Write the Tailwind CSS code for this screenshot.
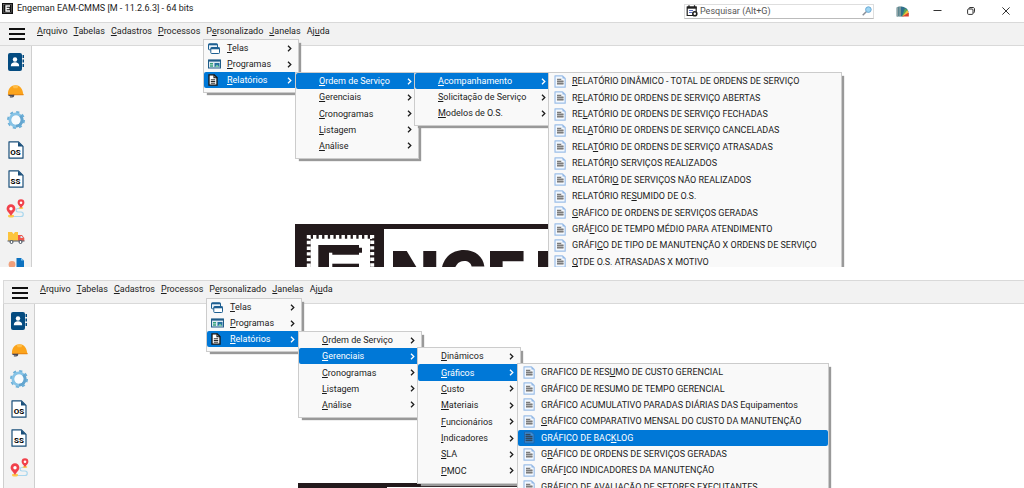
<!DOCTYPE html>
<html lang="pt-BR">
<head>
<meta charset="utf-8">
<title>Engeman EAM-CMMS</title>
<script src="https://cdn.jsdelivr.net/npm/@tailwindcss/browser@4"></script>
</head>
<body class="bg-white font-[Roboto,'Open_Sans',sans-serif] text-[9px] leading-3 text-[#1c1c1c]">

<svg class="hidden" aria-hidden="true">
  <symbol id="burger" viewBox="0 0 16 12"><path d="M0 0h16v2H0zM0 5h16v2H0zM0 10h16v2H0z" fill="#111"/></symbol>
  <symbol id="chev" viewBox="0 0 5 7"><path d="M1 .8 3.8 3.5 1 6.2" fill="none" stroke="currentColor" stroke-width="1.3"/></symbol>
  <symbol id="doc" viewBox="0 0 12 13"><path d="M1 .8h7.500L11.200 3.500V12.200H1z" fill="#f3f8fe" stroke="#9dbfe8" stroke-width="1.200" stroke-linejoin="round"/><path d="M8.500 1 11 3.500H8.500z" fill="#8db4e3"/><path d="M3 3.500h4.500v1.500H9.500V10H3z" fill="#b5b5b5"/><path d="M3 4.500h4M3 6.500h6.500M3 8.500h6.500" stroke="#7c7c7c" stroke-width="1"/></symbol>
  <symbol id="telas" viewBox="0 0 12 11"><rect x=".5" y=".8" width="9" height="6" rx=".8" fill="#eaf3fa" stroke="#1d5f91"/><path d="M.5 1.500h9" stroke="#1d5f91" stroke-width="1.600"/><rect x="2.800" y="4.500" width="8.700" height="6" rx=".8" fill="#fff" stroke="#1d5f91"/><path d="M2.800 5.400h8.700" stroke="#1d5f91" stroke-width="1.800"/></symbol>
  <symbol id="progs" viewBox="0 0 13 10"><rect x=".5" y="1" width="12" height="8" fill="#dceaf3" stroke="#1f5c88"/><path d="M.5 1.700h12" stroke="#1f5c88" stroke-width="1.800"/><path d="M2 4h3v1.500H2zM2 6.200h3v1.500H2z" fill="#35a27a"/><path d="M6.500 4h5v4h-5z" fill="#24709f"/><path d="m7 8 2-2.500L11.200 8z" fill="#7fd1a6"/></symbol>
  <symbol id="report" viewBox="0 0 10 12"><path d="M1 .8h5.200L9 3.600v7.600H1z" fill="#fff" stroke="#111" stroke-width="1.300"/><path d="M6 .8v3h3" fill="none" stroke="#111" stroke-width="1.100"/><path d="M2.800 5.800h4.400M2.800 7.500h4.400M2.800 9.200h4.400" stroke="#111" stroke-width=".9"/></symbol>
  <symbol id="contact" viewBox="0 0 18 18"><rect x="1" y="0" width="14" height="18" rx="2" fill="#044b80"/><path d="M15.500 2h1.500v3h-1.500zM15.500 6.500h1.500v3h-1.500zM15.500 11h1.500v3h-1.500z" fill="#044b80"/><circle cx="8" cy="6.500" r="2.200" fill="#fff"/><path d="M3.800 13.200c0-2.800 1.700-3.900 4.200-3.900s4.200 1.100 4.200 3.900z" fill="#fff"/></symbol>
  <symbol id="helmet" viewBox="0 0 18 14"><path d="M1 10C1 4.500 4.500 1 9 1s7.500 3.500 8 8.500l.5 1.500H1z" fill="#fba41c"/><path d="M6 1.800C8 .8 10.500.8 12 1.600L11 4 7 4z" fill="#ffbe4a"/><path d="M1 10.200h16.500v1.300H8l-2-.6H1z" fill="#ec8a12"/><path d="M1.500 11.700h5.500c0 1.300-1.500 1.600-4 1.600" fill="none" stroke="#4a4a55" stroke-width="1.400"/></symbol>
  <symbol id="gear" viewBox="0 0 18 18"><circle cx="9" cy="9" r="7.900" fill="none" stroke="#6db0d8" stroke-width="2.200" stroke-dasharray="3.100 3.100"/><circle cx="9" cy="9" r="6" fill="none" stroke="#86c3e6" stroke-width="3"/><path d="M13.200 4.800A6 6 0 0 1 9 15" fill="none" stroke="#64a5cf" stroke-width="3"/><circle cx="9" cy="9" r="4.500" fill="#f8fbfd"/></symbol>
  <symbol id="file" viewBox="0 0 16 18"><path d="M1 .8h9.500L15 5.300v11.900H1z" fill="#fff" stroke="#1a4f7a" stroke-width="1.200" stroke-linejoin="round"/><path d="M10 .8V5.500h5z" fill="#1a4f7a"/></symbol>
  <symbol id="route" viewBox="0 0 19 19"><path d="M6 17.500h9c3 0 3-4.500 0-4.500h-3c-2.500 0-2.500-3.500 0-3.500h3" fill="none" stroke="#a9d7ee" stroke-width="1.200"/><ellipse cx="5" cy="17" rx="3" ry="1.500" fill="#ffc84a"/><ellipse cx="15" cy="9" rx="2.400" ry="1.100" fill="#ffc84a"/><path d="M5 17C3 13.500.6 12 .6 9.700a4.400 4.400 0 0 1 8.800 0C9.400 12 7 13.500 5 17z" fill="#f1414b"/><circle cx="5" cy="9.700" r="1.700" fill="#fff"/><path d="M15 9.200c-1.600-2.600-3.400-3.700-3.400-5.500a3.400 3.400 0 0 1 6.800 0c0 1.800-1.800 2.900-3.400 5.500z" fill="#f1414b"/><circle cx="15" cy="3.800" r="1.300" fill="#fff"/></symbol>
  <symbol id="truck" viewBox="0 0 18 14"><path d="M1 1h4l1.500 2L8 1h3v9H1z" fill="#fcc43e"/><path d="M11 4h4l2.300 3v3H11z" fill="#f0564a"/><path d="M13.500 5h1.300l1.200 2h-2.500z" fill="#cfe9f7"/><path d="M.5 10h17" stroke="#6a6f78" stroke-width="1.200"/><circle cx="4.500" cy="11" r="1.500" fill="#fff" stroke="#44505c"/><circle cx="13.500" cy="11" r="1.500" fill="#fff" stroke="#44505c"/></symbol>
  <symbol id="person" viewBox="0 0 18 18"><path d="M9.500 0h4.500l3 2.500V9H9.500z" fill="#0d72c0"/><path d="M14 0v2.500h3z" fill="#7fc0ee"/><circle cx="5" cy="6.500" r="3.400" fill="#f0a07c"/><path d="M0 16c0-4 2-6 5-6s5 2 5 6z" fill="#1479c4"/></symbol>
</svg>

<!-- Janela superior -->
<section class="relative h-[267px] overflow-hidden">
  <header class="flex h-[22px] items-center">
    <svg class="-mt-1.5 ml-0.5 size-[11px] shrink-0" viewBox="0 0 11 11"><rect width="11" height="11" fill="#111"/><rect x="1.300" y="1.300" width="8.400" height="8.400" fill="none" stroke="#888" stroke-width=".5"/><path d="M8 3H4v5h4M4 5.500h3.500" fill="none" stroke="#fff" stroke-width="1.300"/></svg>
    <h1 class="-mt-1.5 ml-1 flex-1">Engeman EAM-CMMS [M - 11.2.6.3] - 64 bits</h1>
    <label class="flex h-[15px] w-[190px] items-center border border-[#dedede] border-b-[#bbb] px-px" for="busca">
      <svg class="size-3 shrink-0" viewBox="0 0 12 12"><path d="M1.200 2h9v8.500h-9z" fill="#fff" stroke="#222" stroke-width="1.200"/><path d="M1 1.500h9.500v2.200H1z" fill="#222"/><path d="M3 .3v1.800M8.500.3v1.800" stroke="#222" stroke-width="1.200"/><path d="M3 5.500h4M3 7.500h3" stroke="#5a6fc4"/><circle cx="8.800" cy="8.800" r="2" fill="#fff" stroke="#222" stroke-width="1.600"/></svg>
      <input id="busca" type="text" aria-label="Pesquisar" placeholder="Pesquisar (Alt+G)" class="ml-0.5 min-w-0 flex-1 bg-transparent placeholder:text-[#555] placeholder:opacity-100">
      <svg class="size-2.5 shrink-0" viewBox="0 0 10 10"><path d="M.7 9.300 4.500 5.500" stroke="#8a8f99" stroke-width="1.500"/><circle cx="6.400" cy="3.600" r="2.800" fill="#9ed5f2" stroke="#6aa9d4"/></svg>
    </label>
    <button class="ml-[22px]" aria-label="Temas"><svg class="h-[11px] w-[13px]" viewBox="0 0 13 11"><path d="M.5 1.500C2 0 6 0 7.500 1.500V10.500H.5z" fill="#5a8790"/><path d="M1.500 1.200v9.300M4 .8v9.700" stroke="#93a3a6"/><path d="M5 10.500V.8C9 .5 12 3 12.500 6z" fill="#2f6f8c"/><path d="M6 10.500 9 2.200l3 2.600z" fill="#58a85a"/><path d="m6 10.500 5.500-6.500 1.300 3.500z" fill="#f3c23c"/><path d="m6 10.500 6.800-4v4z" fill="#d9432f"/></svg></button>
    <button class="ml-6" aria-label="Minimizar"><svg class="h-2.5 w-[9px]" viewBox="0 0 9 10"><path d="M.5 4.500h8" stroke="#333"/></svg></button>
    <button class="ml-[25px]" aria-label="Restaurar"><svg class="size-2" viewBox="0 0 8 8"><rect x=".6" y="2" width="5.400" height="5.400" rx="1" fill="none" stroke="#333"/><path d="M2 1.900V1.500c0-.6.4-1 1-1h3c.9 0 1.500.6 1.500 1.500v2.800c0 .6-.4 1-1 1" fill="none" stroke="#333"/></svg></button>
    <button class="mr-3.5 ml-[27px]" aria-label="Fechar"><svg class="size-2" viewBox="0 0 8 8"><path d="m.4.4 7.200 7.200M7.600.4.4 7.600" stroke="#333"/></svg></button>
  </header>

  <div class="flex h-6 border-y border-[#d9d9d9] bg-[#f2f2f2]">
    <button class="mt-[5px] ml-[9px] h-3 w-4" aria-label="Menu"><svg class="h-3 w-4"><use href="#burger"/></svg></button>
    <nav class="mt-0.5 ml-3 flex h-3 gap-1.5">
      <button><u>A</u>rquivo</button><button><u>T</u>abelas</button><button><u>C</u>adastros</button><button><u>P</u>rocessos</button><button>P<u>e</u>rsonalizado</button><button><u>J</u>anelas</button><button>Aj<u>u</u>da</button>
    </nav>
  </div>

  <div class="flex h-[221px]">
    <aside class="flex h-[236px] w-8 flex-col border-r border-[#cfcfcf] bg-[#f2f2f2] pt-px">
      <button class="grid flex-1 place-items-center" aria-label="Contatos"><svg class="size-[18px]"><use href="#contact"/></svg></button>
      <button class="grid flex-1 place-items-center" aria-label="Funcionários"><svg class="h-3.5 w-[17px]"><use href="#helmet"/></svg></button>
      <button class="grid flex-1 place-items-center" aria-label="Configurações"><svg class="size-[18px]"><use href="#gear"/></svg></button>
      <button class="grid flex-1 place-items-center"><span class="grid h-[18px] w-4 text-[8px] leading-3 font-bold text-black"><svg class="col-start-1 row-start-1 h-[18px] w-4"><use href="#file"/></svg><span class="col-start-1 row-start-1 self-end text-center">OS</span></span></button>
      <button class="grid flex-1 place-items-center"><span class="grid h-[18px] w-4 text-[8px] leading-3 font-bold text-black"><svg class="col-start-1 row-start-1 h-[18px] w-4"><use href="#file"/></svg><span class="col-start-1 row-start-1 self-end text-center">SS</span></span></button>
      <button class="grid flex-1 place-items-center" aria-label="Rotas"><svg class="size-[19px]"><use href="#route"/></svg></button>
      <button class="grid flex-1 place-items-center" aria-label="Transporte"><svg class="h-3.5 w-[18px]"><use href="#truck"/></svg></button>
      <button class="grid flex-1 place-items-center" aria-label="Solicitante"><svg class="size-[18px]"><use href="#person"/></svg></button>
    </aside>
    <main class="flex flex-1 items-end overflow-hidden pl-[263px]">
      <div class="flex h-[43px] w-[254px] overflow-hidden border-t-[5px] border-[#231a1c] text-[#231a1c]">
        <svg class="h-[38px] w-[89px] shrink-0" viewBox="0 0 89 38"><path d="M0 0h89v38H0z" fill="#231a1c"/><path d="M13.800 38V8h63.400V38" fill="none" stroke="#fff" stroke-width="4" stroke-dasharray="3.400 2.300"/><path d="M15.700 9.700H75V38H15.700z" fill="#fff"/><path d="M23.300 16H64v2.700h3v5H64v2H37V38H23.300z" fill="#231a1c"/><path d="M34 23.700h3.300V38H34z" fill="#fff"/><path d="M37.300 34.700H64V38H37.300z" fill="#231a1c"/></svg>
        <p class="mt-3.5 ml-1.5 grid grid-cols-[49px_48px_48px_60px] font-[Inter,sans-serif] text-[64px]/[64px] font-black">
          <span>N</span><span>G</span><span>E</span><span>M</span>
        </p>
      </div>
    </main>
  </div>

  <ul class="absolute top-[39px] left-[203px] w-24 border border-[#ccc] bg-[#f9f9f9] pb-1 shadow-[3px_3px_1px_-1px_#999]">
    <li class="flex h-4"><button class="grid flex-1 grid-cols-[23px_1fr_5px] items-center pr-1.5 text-left"><svg class="ml-1 h-[11px] w-3"><use href="#telas"/></svg><span><u>T</u>elas</span><svg class="h-[7px] w-[5px]"><use href="#chev"/></svg></button></li>
    <li class="flex h-4"><button class="grid flex-1 grid-cols-[23px_1fr_5px] items-center pr-1.5 text-left"><svg class="ml-1 h-2.5 w-[13px]"><use href="#progs"/></svg><span><u>P</u>rogramas</span><svg class="h-[7px] w-[5px]"><use href="#chev"/></svg></button></li>
    <li class="flex h-4"><button class="grid flex-1 grid-cols-[23px_1fr_5px] items-center rounded-xs bg-[#0078d7] pr-1.5 text-left text-white"><svg class="ml-1 h-3 w-2.5"><use href="#report"/></svg><span><u>R</u>elatórios</span><svg class="h-[7px] w-[5px]"><use href="#chev"/></svg></button></li>
  </ul>

  <div class="absolute top-[72px] left-[295px] w-[124px] border border-[#ccc] bg-[#f9f9f9] pb-1 shadow-[3px_3px_1px_-1px_#999]">
    <ul class="flex h-[81px] flex-col">
      <li class="flex flex-1"><button class="flex flex-1 items-center justify-between rounded-xs bg-[#0078d7] pr-1.5 pl-[23px] text-white"><span><u>O</u>rdem de Serviço</span><svg class="h-[7px] w-[5px]"><use href="#chev"/></svg></button></li>
      <li class="flex flex-1"><button class="flex flex-1 items-center justify-between pr-1.5 pl-[23px]"><span><u>G</u>erenciais</span><svg class="h-[7px] w-[5px]"><use href="#chev"/></svg></button></li>
      <li class="flex flex-1"><button class="flex flex-1 items-center justify-between pr-1.5 pl-[23px]"><span><u>C</u>ronogramas</span><svg class="h-[7px] w-[5px]"><use href="#chev"/></svg></button></li>
      <li class="flex flex-1"><button class="flex flex-1 items-center justify-between pr-1.5 pl-[23px]"><span><u>L</u>istagem</span><svg class="h-[7px] w-[5px]"><use href="#chev"/></svg></button></li>
      <li class="flex flex-1"><button class="flex flex-1 items-center justify-between pr-1.5 pl-[23px]"><span><u>A</u>nálise</span><svg class="h-[7px] w-[5px]"><use href="#chev"/></svg></button></li>
    </ul>
  </div>

  <div class="absolute top-[72px] left-[414px] w-[139px] border border-[#ccc] bg-[#f9f9f9] pb-1 shadow-[3px_3px_1px_-1px_#999]">
    <ul class="flex h-12 flex-col">
      <li class="flex flex-1"><button class="flex flex-1 items-center justify-between rounded-xs bg-[#0078d7] pr-1.5 pl-[23px] text-white"><span><u>A</u>companhamento</span><svg class="h-[7px] w-[5px]"><use href="#chev"/></svg></button></li>
      <li class="flex flex-1"><button class="flex flex-1 items-center justify-between pr-1.5 pl-[23px]"><span><u>S</u>olicitação de Serviço</span><svg class="h-[7px] w-[5px]"><use href="#chev"/></svg></button></li>
      <li class="flex flex-1"><button class="flex flex-1 items-center justify-between pr-1.5 pl-[23px]"><span><u>M</u>odelos de O.S.</span><svg class="h-[7px] w-[5px]"><use href="#chev"/></svg></button></li>
    </ul>
  </div>

  <div class="absolute top-[72px] left-[548px] w-[294px] border border-[#ccc] bg-[#f9f9f9] pb-1 shadow-[3px_3px_1px_-1px_#999]">
    <ul class="flex h-[197px] flex-col">
      <li class="flex flex-1"><button class="flex flex-1 items-center gap-1.5 pl-[5px]"><svg class="h-[13px] w-3"><use href="#doc"/></svg><span><u>R</u>ELATÓRIO DINÂMICO - TOTAL DE ORDENS DE SERVIÇO</span></button></li>
      <li class="flex flex-1"><button class="flex flex-1 items-center gap-1.5 pl-[5px]"><svg class="h-[13px] w-3"><use href="#doc"/></svg><span>R<u>E</u>LATÓRIO DE ORDENS DE SERVIÇO ABERTAS</span></button></li>
      <li class="flex flex-1"><button class="flex flex-1 items-center gap-1.5 pl-[5px]"><svg class="h-[13px] w-3"><use href="#doc"/></svg><span>RE<u>L</u>ATÓRIO DE ORDENS DE SERVIÇO FECHADAS</span></button></li>
      <li class="flex flex-1"><button class="flex flex-1 items-center gap-1.5 pl-[5px]"><svg class="h-[13px] w-3"><use href="#doc"/></svg><span>REL<u>A</u>TÓRIO DE ORDENS DE SERVIÇO CANCELADAS</span></button></li>
      <li class="flex flex-1"><button class="flex flex-1 items-center gap-1.5 pl-[5px]"><svg class="h-[13px] w-3"><use href="#doc"/></svg><span>RELA<u>T</u>ÓRIO DE ORDENS DE SERVIÇO ATRASADAS</span></button></li>
      <li class="flex flex-1"><button class="flex flex-1 items-center gap-1.5 pl-[5px]"><svg class="h-[13px] w-3"><use href="#doc"/></svg><span>RELATÓR<u>I</u>O SERVIÇOS REALIZADOS</span></button></li>
      <li class="flex flex-1"><button class="flex flex-1 items-center gap-1.5 pl-[5px]"><svg class="h-[13px] w-3"><use href="#doc"/></svg><span>RELATÓRI<u>O</u> DE SERVIÇOS NÃO REALIZADOS</span></button></li>
      <li class="flex flex-1"><button class="flex flex-1 items-center gap-1.5 pl-[5px]"><svg class="h-[13px] w-3"><use href="#doc"/></svg><span>RELATÓRIO RE<u>S</u>UMIDO DE O.S.</span></button></li>
      <li class="flex flex-1"><button class="flex flex-1 items-center gap-1.5 pl-[5px]"><svg class="h-[13px] w-3"><use href="#doc"/></svg><span><u>G</u>RÁFICO DE ORDENS DE SERVIÇOS GERADAS</span></button></li>
      <li class="flex flex-1"><button class="flex flex-1 items-center gap-1.5 pl-[5px]"><svg class="h-[13px] w-3"><use href="#doc"/></svg><span>GRÁ<u>F</u>ICO DE TEMPO MÉDIO PARA ATENDIMENTO</span></button></li>
      <li class="flex flex-1"><button class="flex flex-1 items-center gap-1.5 pl-[5px]"><svg class="h-[13px] w-3"><use href="#doc"/></svg><span>GRÁFI<u>C</u>O DE TIPO DE MANUTENÇÃO X ORDENS DE SERVIÇO</span></button></li>
      <li class="flex flex-1"><button class="flex flex-1 items-center gap-1.5 pl-[5px]"><svg class="h-[13px] w-3"><use href="#doc"/></svg><span><u>Q</u>TDE O.S. ATRASADAS X MOTIVO</span></button></li>
    </ul>
  </div>
</section>

<!-- Janela inferior -->
<section class="relative mt-[13px] ml-[3px] h-52 overflow-hidden">
  <div class="flex h-6 border-y border-l border-[#d9d9d9] bg-[#f2f2f2]">
    <button class="mt-1.5 ml-2 h-3 w-4" aria-label="Menu"><svg class="h-3 w-4"><use href="#burger"/></svg></button>
    <nav class="mt-0.5 ml-3 flex h-3 gap-1.5">
      <button><u>A</u>rquivo</button><button><u>T</u>abelas</button><button><u>C</u>adastros</button><button><u>P</u>rocessos</button><button>P<u>e</u>rsonalizado</button><button><u>J</u>anelas</button><button>Aj<u>u</u>da</button>
    </nav>
  </div>

  <div class="flex h-[184px]">
    <aside class="flex w-8 flex-col border-x border-[#cfcfcf] bg-[#f2f2f2] pt-0.5 pb-1.5">
      <button class="grid flex-1 place-items-center" aria-label="Contatos"><svg class="size-[18px]"><use href="#contact"/></svg></button>
      <button class="grid flex-1 place-items-center" aria-label="Funcionários"><svg class="h-3.5 w-[17px]"><use href="#helmet"/></svg></button>
      <button class="grid flex-1 place-items-center" aria-label="Configurações"><svg class="size-[18px]"><use href="#gear"/></svg></button>
      <button class="grid flex-1 place-items-center"><span class="grid h-[18px] w-4 text-[8px] leading-3 font-bold text-black"><svg class="col-start-1 row-start-1 h-[18px] w-4"><use href="#file"/></svg><span class="col-start-1 row-start-1 self-end text-center">OS</span></span></button>
      <button class="grid flex-1 place-items-center"><span class="grid h-[18px] w-4 text-[8px] leading-3 font-bold text-black"><svg class="col-start-1 row-start-1 h-[18px] w-4"><use href="#file"/></svg><span class="col-start-1 row-start-1 self-end text-center">SS</span></span></button>
      <button class="grid flex-1 place-items-center" aria-label="Rotas"><svg class="size-[19px]"><use href="#route"/></svg></button>
    </aside>
    <main class="flex flex-1 items-end pl-[263px]">
      <div class="flex h-[5px] w-[254px] border-t-4 border-[#231a1c]"><div class="w-[89px] bg-[#231a1c]"></div></div>
    </main>
  </div>

  <ul class="absolute top-[18px] left-[203px] w-24 border border-[#ccc] bg-[#f9f9f9] pb-1 shadow-[3px_3px_1px_-1px_#999]">
    <li class="flex h-4"><button class="grid flex-1 grid-cols-[23px_1fr_5px] items-center pr-1.5 text-left"><svg class="ml-1 h-[11px] w-3"><use href="#telas"/></svg><span><u>T</u>elas</span><svg class="h-[7px] w-[5px]"><use href="#chev"/></svg></button></li>
    <li class="flex h-4"><button class="grid flex-1 grid-cols-[23px_1fr_5px] items-center pr-1.5 text-left"><svg class="ml-1 h-2.5 w-[13px]"><use href="#progs"/></svg><span><u>P</u>rogramas</span><svg class="h-[7px] w-[5px]"><use href="#chev"/></svg></button></li>
    <li class="flex h-4"><button class="grid flex-1 grid-cols-[23px_1fr_5px] items-center rounded-xs bg-[#0078d7] pr-1.5 text-left text-white"><svg class="ml-1 h-3 w-2.5"><use href="#report"/></svg><span><u>R</u>elatórios</span><svg class="h-[7px] w-[5px]"><use href="#chev"/></svg></button></li>
  </ul>

  <div class="absolute top-[51px] left-[295px] w-[124px] border border-[#ccc] bg-[#f9f9f9] pb-1 shadow-[3px_3px_1px_-1px_#999]">
    <ul class="flex h-[81px] flex-col">
      <li class="flex flex-1"><button class="flex flex-1 items-center justify-between pr-1.5 pl-[23px]"><span><u>O</u>rdem de Serviço</span><svg class="h-[7px] w-[5px]"><use href="#chev"/></svg></button></li>
      <li class="flex flex-1"><button class="flex flex-1 items-center justify-between rounded-xs bg-[#0078d7] pr-1.5 pl-[23px] text-white"><span><u>G</u>erenciais</span><svg class="h-[7px] w-[5px]"><use href="#chev"/></svg></button></li>
      <li class="flex flex-1"><button class="flex flex-1 items-center justify-between pr-1.5 pl-[23px]"><span><u>C</u>ronogramas</span><svg class="h-[7px] w-[5px]"><use href="#chev"/></svg></button></li>
      <li class="flex flex-1"><button class="flex flex-1 items-center justify-between pr-1.5 pl-[23px]"><span><u>L</u>istagem</span><svg class="h-[7px] w-[5px]"><use href="#chev"/></svg></button></li>
      <li class="flex flex-1"><button class="flex flex-1 items-center justify-between pr-1.5 pl-[23px]"><span><u>A</u>nálise</span><svg class="h-[7px] w-[5px]"><use href="#chev"/></svg></button></li>
    </ul>
  </div>

  <div class="absolute top-[67px] left-[414px] w-[104px] border border-[#ccc] bg-[#f9f9f9] pb-1 shadow-[3px_3px_1px_-1px_#999]">
    <ul class="flex h-[131px] flex-col">
      <li class="flex flex-1"><button class="flex flex-1 items-center justify-between pr-1.5 pl-[23px]"><span><u>D</u>inâmicos</span><svg class="h-[7px] w-[5px]"><use href="#chev"/></svg></button></li>
      <li class="flex flex-1"><button class="flex flex-1 items-center justify-between rounded-xs bg-[#0078d7] pr-1.5 pl-[23px] text-white"><span><u>G</u>ráficos</span><svg class="h-[7px] w-[5px]"><use href="#chev"/></svg></button></li>
      <li class="flex flex-1"><button class="flex flex-1 items-center justify-between pr-1.5 pl-[23px]"><span><u>C</u>usto</span><svg class="h-[7px] w-[5px]"><use href="#chev"/></svg></button></li>
      <li class="flex flex-1"><button class="flex flex-1 items-center justify-between pr-1.5 pl-[23px]"><span><u>M</u>ateriais</span><svg class="h-[7px] w-[5px]"><use href="#chev"/></svg></button></li>
      <li class="flex flex-1"><button class="flex flex-1 items-center justify-between pr-1.5 pl-[23px]"><span><u>F</u>uncionários</span><svg class="h-[7px] w-[5px]"><use href="#chev"/></svg></button></li>
      <li class="flex flex-1"><button class="flex flex-1 items-center justify-between pr-1.5 pl-[23px]"><span><u>I</u>ndicadores</span><svg class="h-[7px] w-[5px]"><use href="#chev"/></svg></button></li>
      <li class="flex flex-1"><button class="flex flex-1 items-center justify-between pr-1.5 pl-[23px]"><span><u>S</u>LA</span><svg class="h-[7px] w-[5px]"><use href="#chev"/></svg></button></li>
      <li class="flex flex-1"><button class="flex flex-1 items-center justify-between pr-1.5 pl-[23px]"><span><u>P</u>MOC</span><svg class="h-[7px] w-[5px]"><use href="#chev"/></svg></button></li>
    </ul>
  </div>

  <div class="absolute top-[83px] left-[514px] w-[312px] border border-[#ccc] bg-[#f9f9f9] pb-1 shadow-[3px_3px_1px_-1px_#999]">
    <ul class="flex h-[131px] flex-col">
      <li class="flex flex-1"><button class="flex flex-1 items-center gap-1.5 pl-[5px]"><svg class="h-[13px] w-3"><use href="#doc"/></svg><span>GRAFICO DE RES<u>U</u>MO DE CUSTO GERENCIAL</span></button></li>
      <li class="flex flex-1"><button class="flex flex-1 items-center gap-1.5 pl-[5px]"><svg class="h-[13px] w-3"><use href="#doc"/></svg><span>GRÁFICO DE RESUMO DE TEMPO GERENCIAL</span></button></li>
      <li class="flex flex-1"><button class="flex flex-1 items-center gap-1.5 pl-[5px]"><svg class="h-[13px] w-3"><use href="#doc"/></svg><span>GRÁFICO ACUMULATIVO PARADAS DIÁRIAS DAS Equipamentos</span></button></li>
      <li class="flex flex-1"><button class="flex flex-1 items-center gap-1.5 pl-[5px]"><svg class="h-[13px] w-3"><use href="#doc"/></svg><span><u>G</u>RÁFICO COMPARATIVO MENSAL DO CUSTO DA MANUTENÇÃO</span></button></li>
      <li class="flex flex-1"><button class="flex flex-1 items-center gap-1.5 rounded-xs bg-[#0078d7] pl-[5px] text-white"><svg class="h-[13px] w-3" viewBox="0 0 12 13"><path d="M1.500 1h7L11 3.500V12H1.500z" fill="#3d8fd8" stroke="#1f66ae"/><path d="M2.500 3.500h5M2.500 5.500h7M2.500 7.500h7M2.500 9.500h7" stroke="#33475c" stroke-width="1.300"/></svg><span>GRÁFICO DE BAC<u>K</u>LOG</span></button></li>
      <li class="flex flex-1"><button class="flex flex-1 items-center gap-1.5 pl-[5px]"><svg class="h-[13px] w-3"><use href="#doc"/></svg><span>G<u>R</u>ÁFICO DE ORDENS DE SERVIÇOS GERADAS</span></button></li>
      <li class="flex flex-1"><button class="flex flex-1 items-center gap-1.5 pl-[5px]"><svg class="h-[13px] w-3"><use href="#doc"/></svg><span>GRÁF<u>I</u>CO INDICADORES DA MANUTENÇÃO</span></button></li>
      <li class="flex flex-1"><button class="flex flex-1 items-center gap-1.5 pl-[5px]"><svg class="h-[13px] w-3"><use href="#doc"/></svg><span>GRÁFICO DE AVALIAÇÃO DE SETORES EXECUTANTES</span></button></li>
    </ul>
  </div>
</section>
</body>
</html>
